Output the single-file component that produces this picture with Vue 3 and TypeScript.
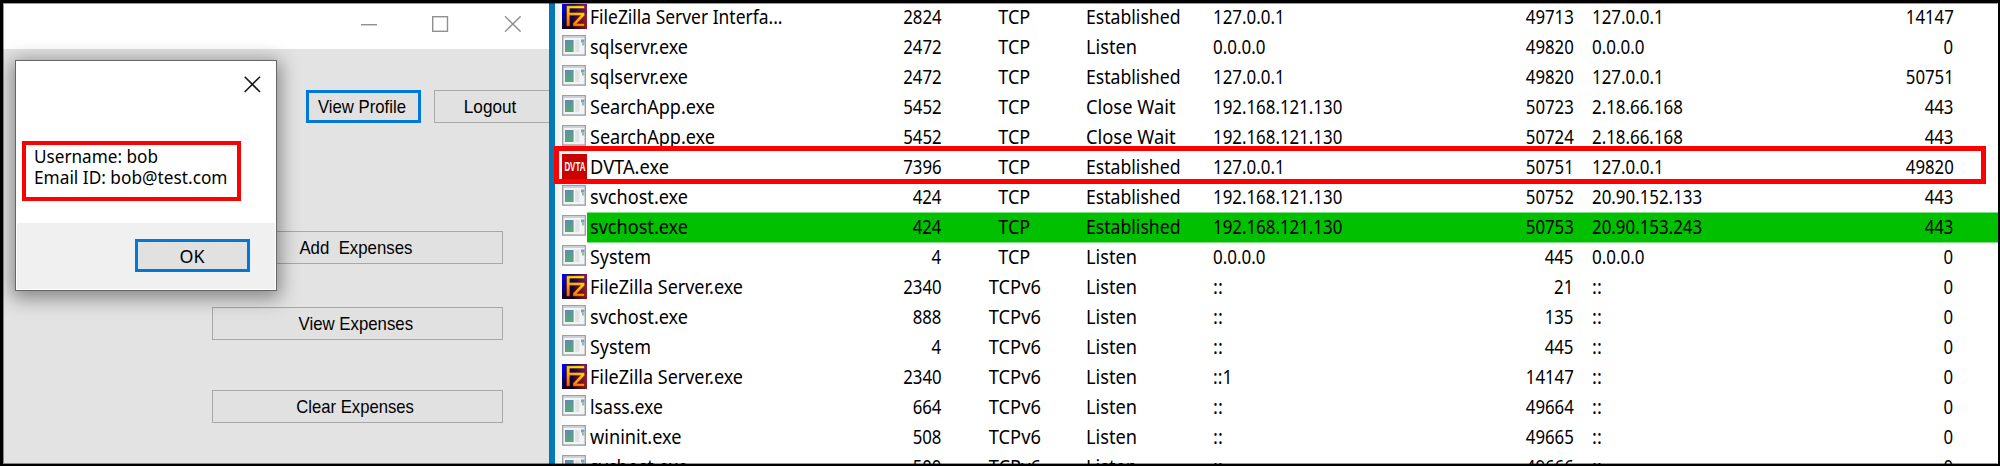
<script setup lang="ts">
type Kind = 'app' | 'fz' | 'dvta'
type Row = {
  kind: Kind
  name: string
  pid: string
  proto: string
  state: string
  local: string
  lport: string
  remote: string
  rport: string
  hit?: boolean
}

const raw: [Kind, string, string, string, string, string, string, string, string][] = [
  ['fz', 'FileZilla Server Interfa...', '2824', 'TCP', 'Established', '127.0.0.1', '49713', '127.0.0.1', '14147'],
  ['app', 'sqlservr.exe', '2472', 'TCP', 'Listen', '0.0.0.0', '49820', '0.0.0.0', '0'],
  ['app', 'sqlservr.exe', '2472', 'TCP', 'Established', '127.0.0.1', '49820', '127.0.0.1', '50751'],
  ['app', 'SearchApp.exe', '5452', 'TCP', 'Close Wait', '192.168.121.130', '50723', '2.18.66.168', '443'],
  ['app', 'SearchApp.exe', '5452', 'TCP', 'Close Wait', '192.168.121.130', '50724', '2.18.66.168', '443'],
  ['dvta', 'DVTA.exe', '7396', 'TCP', 'Established', '127.0.0.1', '50751', '127.0.0.1', '49820'],
  ['app', 'svchost.exe', '424', 'TCP', 'Established', '192.168.121.130', '50752', '20.90.152.133', '443'],
  ['app', 'svchost.exe', '424', 'TCP', 'Established', '192.168.121.130', '50753', '20.90.153.243', '443'],
  ['app', 'System', '4', 'TCP', 'Listen', '0.0.0.0', '445', '0.0.0.0', '0'],
  ['fz', 'FileZilla Server.exe', '2340', 'TCPv6', 'Listen', '::', '21', '::', '0'],
  ['app', 'svchost.exe', '888', 'TCPv6', 'Listen', '::', '135', '::', '0'],
  ['app', 'System', '4', 'TCPv6', 'Listen', '::', '445', '::', '0'],
  ['fz', 'FileZilla Server.exe', '2340', 'TCPv6', 'Listen', '::1', '14147', '::', '0'],
  ['app', 'lsass.exe', '664', 'TCPv6', 'Listen', '::', '49664', '::', '0'],
  ['app', 'wininit.exe', '508', 'TCPv6', 'Listen', '::', '49665', '::', '0'],
  ['app', 'svchost.exe', '500', 'TCPv6', 'Listen', '::', '49666', '::', '0'],
]

const rows: Row[] = raw.map(([kind, name, pid, proto, state, local, lport, remote, rport], i) => ({
  kind, name, pid, proto, state, local, lport, remote, rport, hit: i === 7,
}))

const addLabel = 'Add  Expenses'

// Advance widths of the interface font, in pixels.
const widths: Record<string, number> = {
  'FileZilla Server Interfa...': 192.5,
  'sqlservr.exe': 98,
  'SearchApp.exe': 125,
  'DVTA.exe': 79,
  'svchost.exe': 98,
  System: 61,
  'FileZilla Server.exe': 153,
  'lsass.exe': 73,
  'wininit.exe': 91.5,
  TCP: 32,
  TCPv6: 52,
  Established: 94.5,
  Listen: 51,
  'Close Wait': 89.5,
}

function widthOf(s: string): number {
  if (widths[s]) return widths[s]
  let w = 0
  for (const c of s) w += c === '.' ? 4.7 : c === ':' ? 4.9 : 9.6
  return w
}

// Condenses a label horizontally so that it takes the given width.
const vFit = {
  mounted(el: HTMLElement, binding: { value: number }) {
    const w = el.getBoundingClientRect().width
    if (w > 0) el.style.transform = `scaleX(${binding.value / w})`
  },
}
</script>

<template>
  <div class="screen">
    <section class="window">
      <header class="titlebar">
        <svg class="caption" width="160" height="16" viewBox="0 0 160 16">
          <g fill="none" stroke="#8f8f8f" stroke-width="1.4">
            <path d="M0 8.7H16" />
            <rect x="71.7" y=".7" width="14.8" height="14.6" />
            <path d="M144 .3L159.6 15.7M159.6 .3L144 15.7" />
          </g>
        </svg>
      </header>
      <div class="client">
        <div class="top-actions">
          <div class="btn focus"><span v-fit="88" class="t">View Profile</span></div>
          <div class="btn cut"><span v-fit="52.5" class="t">Logout</span></div>
        </div>
        <div class="btn wide add"><span v-fit="113" class="t">{{ addLabel }}</span></div>
        <div class="btn wide view"><span v-fit="114.5" class="t">View Expenses</span></div>
        <div class="btn wide clear"><span v-fit="117.5" class="t">Clear Expenses</span></div>
      </div>

      <div class="dialog">
        <div class="dialog-body">
          <svg class="close" width="17" height="17" viewBox="0 0 17 17">
            <path d="M.7 .7L16 16M16 .7L.7 16" stroke="#1a1a1a" stroke-width="1.6" />
          </svg>
          <div class="note">
            <div><span v-fit="124" class="t">Username: bob</span></div>
            <div><span v-fit="193.5" class="t">Email ID: bob@test.com</span></div>
          </div>
        </div>
        <div class="dialog-foot">
          <div class="btn focus ok"><span v-fit="25" class="t">OK</span></div>
        </div>
      </div>
    </section>

    <div class="divider"></div>

    <section class="table">
      <div v-for="(r, i) in rows" :key="i" class="row" :class="{ hit: r.hit }">
        <div class="icon">
          <svg v-if="r.kind === 'app'" class="i-app" width="24" height="21" viewBox="0 0 24 21">
            <defs>
              <linearGradient id="scr" x1="0" y1="0" x2=".3" y2="1">
                <stop offset="0" stop-color="#6488b4" />
                <stop offset="1" stop-color="#55a877" />
              </linearGradient>
            </defs>
            <rect x=".7" y=".7" width="22.6" height="19.4" fill="#f3f4f5" stroke="#9ba1a6" stroke-width="1.4" />
            <path d="M1.4 2.2H22.6" stroke="#c8ced3" stroke-width="1.4" />
            <rect x="3" y="5" width="8.6" height="12" fill="url(#scr)" />
            <rect x="13.2" y="5" width="4.2" height="12" fill="#e2e2e2" />
            <rect x="19" y="4.5" width="3.4" height="3" fill="#7c9fc0" />
            <rect x="20" y="7.5" width="2.4" height="3" fill="#8fc0a4" />
          </svg>
          <svg v-else-if="r.kind === 'fz'" class="i-sq" width="25" height="25" viewBox="0 0 25 25">
            <defs>
              <linearGradient id="fzb" x1="0" y1="0" x2="1" y2="0">
                <stop offset="0" stop-color="#0000f0" />
                <stop offset=".45" stop-color="#200050" />
                <stop offset="1" stop-color="#8c1470" />
              </linearGradient>
              <linearGradient id="fzd" x1="0" y1="0" x2="0" y2="1">
                <stop offset=".2" stop-color="#100010" stop-opacity="0" />
                <stop offset="1" stop-color="#100004" stop-opacity=".9" />
              </linearGradient>
              <linearGradient id="fzr" x1="0" y1="0" x2="1" y2="0">
                <stop offset=".4" stop-color="#b02020" stop-opacity="0" />
                <stop offset="1" stop-color="#b02020" stop-opacity=".75" />
              </linearGradient>
              <linearGradient id="fzt" x1=".7" y1="0" x2=".3" y2="1">
                <stop offset="0" stop-color="#fff000" />
                <stop offset=".5" stop-color="#ffb400" />
                <stop offset="1" stop-color="#ff6400" />
              </linearGradient>
            </defs>
            <rect width="25" height="25" fill="url(#fzb)" />
            <rect width="25" height="25" fill="url(#fzd)" />
            <rect y="10" width="25" height="15" fill="url(#fzr)" />
            <path
              d="M4.5 1.8H22.5V4.6H7.8V8.6H22.7V11.4L15 19.4H22.5V22.3H10.9V19.3L18.4 11.4H7.8V22.3H4.5Z"
              fill="url(#fzt)"
              stroke="#3a0018"
              stroke-width=".4"
            />
          </svg>
          <div v-else class="i-dvta"><span v-fit="21">DVTA</span></div>
        </div>
        <div class="c name"><span v-fit="widthOf(r.name)" class="t">{{ r.name }}</span></div>
        <div class="c pid r"><span v-fit="widthOf(r.pid)" class="t">{{ r.pid }}</span></div>
        <div class="c proto m"><span v-fit="widthOf(r.proto)" class="t">{{ r.proto }}</span></div>
        <div class="c state"><span v-fit="widthOf(r.state)" class="t">{{ r.state }}</span></div>
        <div class="c local"><span v-fit="widthOf(r.local)" class="t">{{ r.local }}</span></div>
        <div class="c lport r"><span v-fit="widthOf(r.lport)" class="t">{{ r.lport }}</span></div>
        <div class="c remote"><span v-fit="widthOf(r.remote)" class="t">{{ r.remote }}</span></div>
        <div class="c rport r"><span v-fit="widthOf(r.rport)" class="t">{{ r.rport }}</span></div>
      </div>
    </section>
    <div class="mark"></div>
  </div>
</template>

<style>
body {
  margin: 0;
  overflow: hidden;
}
</style>

<style scoped>
.screen {
  position: relative;
  box-sizing: border-box;
  width: 2000px;
  height: 466px;
  border: solid #000;
  border-width: 3px 2px 2px 3px;
  display: flex;
  overflow: hidden;
  background: #fff;
  color: #000;
  font-family: 'Noto Sans', 'Open Sans', sans-serif;
  font-size: 19.5px;
}
.screen::after {
  content: '';
  position: absolute;
  inset: 0;
  border: 1px solid rgba(0, 0, 0, 0.4);
  border-right-color: transparent;
}
.t {
  display: inline-block;
  white-space: pre;
  transform-origin: left center;
}
.window {
  position: relative;
  width: 546px;
  height: 461px;
  flex: none;
  overflow: hidden;
  display: flex;
  flex-direction: column;
}
.titlebar {
  height: 46px;
  flex: none;
  display: flex;
  justify-content: flex-end;
}
.caption {
  margin: 13px 28px 0 0;
}
.client {
  flex: 1;
  background: #e3e3e3;
  display: flex;
  flex-direction: column;
}
.top-actions {
  display: flex;
  gap: 13px;
  margin: 41px 0 0 303px;
}
.btn {
  box-sizing: border-box;
  flex: none;
  width: 115px;
  height: 33px;
  border: 1px solid #a8a8a8;
  background: #e1e1e1;
  display: flex;
  align-items: center;
  justify-content: center;
  font-family: 'Liberation Sans', Arial, sans-serif;
  font-size: 19px;
  line-height: 22px;
}
.btn .t {
  transform-origin: center;
}
.btn:not(.ok) {
  padding-right: 4px;
}
.focus {
  border: 3px solid #0078d7;
}
.cut {
  width: 116px;
}
.wide {
  width: 291px;
  margin-left: 209px;
}
.add {
  margin-top: 108px;
}
.view {
  margin-top: 43px;
}
.clear {
  margin-top: 50px;
}
.dialog {
  position: absolute;
  left: 12px;
  top: 57px;
  width: 262px;
  height: 231px;
  box-sizing: border-box;
  border: 1.5px solid #666;
  background: #fff;
  box-shadow: 0 4px 18px 3px rgba(0, 0, 0, 0.42);
  display: flex;
  flex-direction: column;
}
.dialog-body {
  height: 162px;
  flex: none;
  display: flex;
  flex-direction: column;
}
.close {
  align-self: flex-end;
  margin: 15px 15px 0 0;
}
.note {
  box-sizing: border-box;
  width: 219px;
  height: 60px;
  margin: 48px 0 0 6px;
  border: 4.5px solid #f00;
  padding: 0 0 0 8px;
  font-size: 18.6px;
  line-height: 21px;
}
.note > div {
  height: 21px;
}
.dialog-foot {
  flex: 1;
  margin: 0 1px 1px;
  background: #f0f0f0;
}
.ok {
  width: 115px;
  margin: 16px 0 0 118px;
  font-family: 'Noto Sans', sans-serif;
  font-size: 18.6px;
}
.divider {
  width: 6px;
  flex: none;
  background: #0078b8;
}
.table {
  flex: 1;
  height: 461px;
  overflow: hidden;
  background: linear-gradient(90deg, #efefef, #fafafa 7px, #fff 25px);
}
.row {
  height: 30px;
  display: flex;
}
.hit .c {
  background: linear-gradient(#00c000 29px, #80e080 29px);
  box-shadow: 0 -1px #80e080;
}
.icon {
  width: 32px;
  flex: none;
}
.icon svg,
.i-dvta {
  display: block;
  margin-left: 7px;
}
.i-app {
  margin-top: 2px;
}
.i-sq {
  margin-top: 1px;
}
.i-dvta {
  width: 25px;
  height: 25px;
  margin-top: 1px;
  background: #c80000;
  color: #fff;
  font: bold 13.5px/26px 'Liberation Sans', sans-serif;
  display: flex;
  justify-content: center;
}
.c {
  flex: none;
  box-sizing: border-box;
  height: 30px;
  line-height: 27px;
  white-space: nowrap;
}
.name {
  width: 233px;
  padding-left: 3px;
}
.pid {
  width: 122px;
  padding-right: 0.5px;
}
.r {
  text-align: right;
}
.r .t {
  transform-origin: right center;
}
.proto {
  width: 143px;
  padding-left: 2px;
}
.m {
  text-align: center;
}
.m .t {
  transform-origin: center;
}
.state {
  width: 127px;
  padding-left: 1px;
}
.local {
  width: 250px;
  padding-left: 0.5px;
}
.lport {
  width: 112px;
  padding-right: 0.5px;
}
.remote {
  width: 260px;
  padding-left: 17.5px;
}
.rport {
  width: 164px;
  padding-right: 44.5px;
}
.mark {
  position: absolute;
  left: 551px;
  top: 143px;
  width: 1432px;
  height: 38px;
  box-sizing: border-box;
  border: 5px solid #f00;
}
</style>
